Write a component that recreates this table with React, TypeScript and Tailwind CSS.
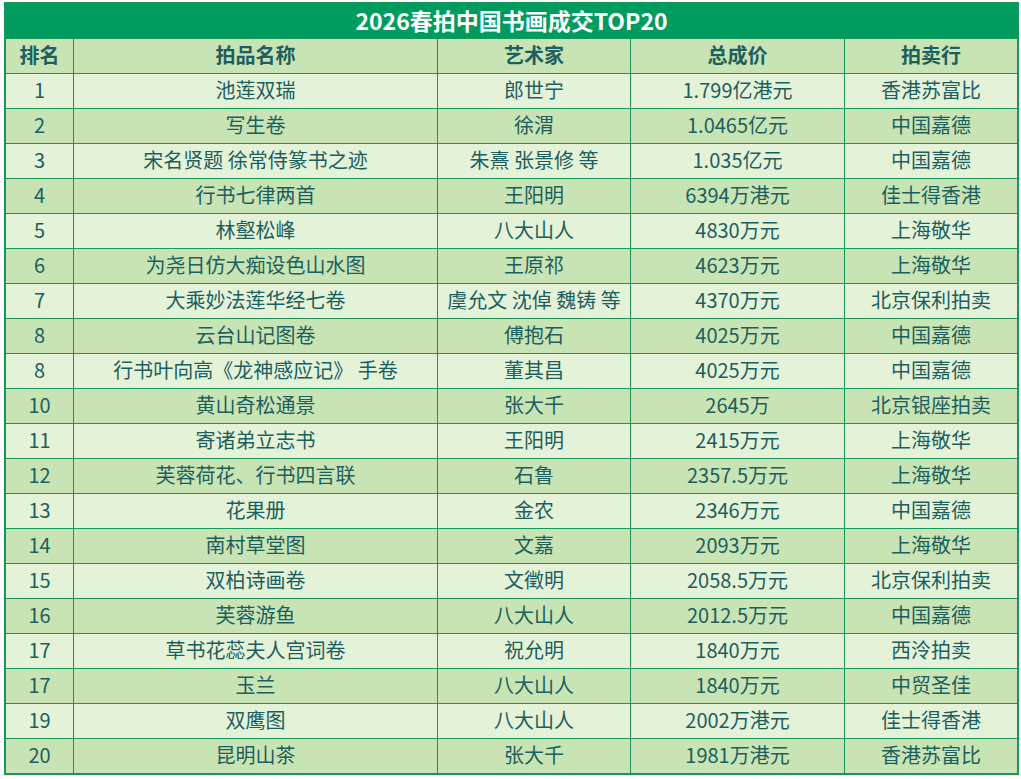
const rows: [string, string, string, string, string][] = [
  ['1', '池莲双瑞', '郎世宁', '1.799亿港元', '香港苏富比'],
  ['2', '写生卷', '徐渭', '1.0465亿元', '中国嘉德'],
  ['3', '宋名贤题 徐常侍篆书之迹', '朱熹 张景修 等', '1.035亿元', '中国嘉德'],
  ['4', '行书七律两首', '王阳明', '6394万港元', '佳士得香港'],
  ['5', '林壑松峰', '八大山人', '4830万元', '上海敬华'],
  ['6', '为尧日仿大痴设色山水图', '王原祁', '4623万元', '上海敬华'],
  ['7', '大乘妙法莲华经七卷', '虞允文 沈倬 魏铸 等', '4370万元', '北京保利拍卖'],
  ['8', '云台山记图卷', '傅抱石', '4025万元', '中国嘉德'],
  ['8', '行书叶向高《龙神感应记》 手卷', '董其昌', '4025万元', '中国嘉德'],
  ['10', '黄山奇松通景', '张大千', '2645万', '北京银座拍卖'],
  ['11', '寄诸弟立志书', '王阳明', '2415万元', '上海敬华'],
  ['12', '芙蓉荷花、行书四言联', '石鲁', '2357.5万元', '上海敬华'],
  ['13', '花果册', '金农', '2346万元', '中国嘉德'],
  ['14', '南村草堂图', '文嘉', '2093万元', '上海敬华'],
  ['15', '双柏诗画卷', '文徵明', '2058.5万元', '北京保利拍卖'],
  ['16', '芙蓉游鱼', '八大山人', '2012.5万元', '中国嘉德'],
  ['17', '草书花蕊夫人宫词卷', '祝允明', '1840万元', '西泠拍卖'],
  ['17', '玉兰', '八大山人', '1840万元', '中贸圣佳'],
  ['19', '双鹰图', '八大山人', '2002万港元', '佳士得香港'],
  ['20', '昆明山茶', '张大千', '1981万港元', '香港苏富比'],
];

const headers = ['排名', '拍品名称', '艺术家', '总成价', '拍卖行'];

function Row({ cells, head, light }: { cells: string[]; head?: boolean; light?: boolean }) {
  return (
    <div
      className={`grid grid-cols-[68px_364px_193px_214px_1fr] h-[35px] border-t border-[#13975b] ${
        light ? 'bg-[#e4f2d8]' : 'bg-[#c8e4b4]'
      } ${head ? 'font-bold' : ''}`}
    >
      {cells.map((c, i) => (
        <div
          key={i}
          className={`flex items-center justify-center whitespace-nowrap pb-[3px] ${i < 4 ? 'border-r border-[#13975b]' : ''}`}
        >
          {c}
        </div>
      ))}
    </div>
  );
}

export default function App() {
  return (
    <div className="w-[1021px] h-[779px] bg-white pt-[2px] pl-[4px]">
      <div
        className="w-[1015px] border-2 border-[#13975b] text-[20px] leading-none text-[#1d5e5e]"
        style={{ fontFamily: '"Noto Sans CJK SC", "Noto Sans", sans-serif' }}
      >
        <div className="h-[34px] bg-[#009b5f] flex items-center justify-center pb-[2px] text-white font-bold text-[23px]">
          2026春拍中国书画成交TOP20
        </div>
        <Row cells={headers} head />
        {rows.map((r, i) => (
          <Row key={i} cells={r} light={i % 2 === 0} />
        ))}
      </div>
    </div>
  );
}
